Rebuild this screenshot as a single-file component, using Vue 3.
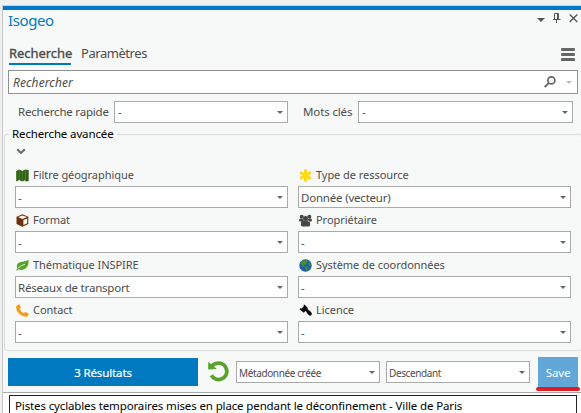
<script setup>
const filters = [
  { id: 'map', label: 'Filtre géographique', value: '-' },
  { id: 'star', label: 'Type de ressource', value: 'Donnée (vecteur)' },
  { id: 'cube', label: 'Format', value: '-' },
  { id: 'users', label: 'Propriétaire', value: '-' },
  { id: 'leaf', label: 'Thématique INSPIRE', value: 'Réseaux de transport' },
  { id: 'globe', label: 'Système de coordonnées', value: '-' },
  { id: 'phone', label: 'Contact', value: '-' },
  { id: 'gavel', label: 'Licence', value: '-' },
]
</script>

<template>
  <div class="window">
    <div class="panel">
      <header class="title-bar">
        <h1>Isogeo</h1>
        <div class="window-tools">
          <svg width="8" height="14" viewBox="0 0 8 14"><path d="M0 6H8L4 10Z" fill="#555" /></svg>
          <svg width="8" height="14" viewBox="0 0 8 14" fill="none" stroke="#555"><path d="M1.500 7V1.500H5.500V7M4.500 1V7M0 7.500H7.500M3.500 7.500V11" /></svg>
          <svg width="9" height="14" viewBox="0 0 9 14" fill="none" stroke="#555" stroke-width="1.400"><path d="M.7 2.500L8.300 10.100M8.300 2.500L.7 10.100" /></svg>
        </div>
      </header>

      <nav class="tabs">
        <span class="tab active">Recherche</span>
        <span class="tab">Paramètres</span>
        <svg class="menu" width="14" height="14" viewBox="0 0 14 14" fill="#666"><rect y="0" width="14" height="3" rx="1" /><rect y="5" width="14" height="3" rx="1" /><rect y="10" width="14" height="3" rx="1" /></svg>
      </nav>

      <div class="search">
        <span>Rechercher</span>
        <svg width="12" height="12" viewBox="0 0 12 12" fill="none" stroke="#666"><circle cx="7.400" cy="4.400" r="3.500" stroke-width="1.700" /><path d="M4.800 7L.6 11.200" stroke-width="1.800" /></svg>
        <i class="arrow pale"></i>
      </div>

      <div class="quick">
        <label class="quick-label">Recherche rapide</label>
        <div class="combo"><span>-</span><i class="arrow"></i></div>
        <label class="key-label">Mots clés</label>
        <div class="combo"><span>-</span><i class="arrow"></i></div>
      </div>

      <fieldset class="advanced">
        <legend>Recherche avancée</legend>
        <svg class="chevron" width="10" height="7" viewBox="0 0 10 7" fill="none" stroke="#666" stroke-width="2"><path d="M1.200 1.300L5 4.900L8.800 1.300" /></svg>
        <div class="grid">
          <div v-for="f in filters" :key="f.id" class="field">
            <label class="field-label">
              <svg width="13" height="13" viewBox="0 0 13 13">
                <g v-if="f.id === 'map'">
                  <path d="M.2 2L3.200.5V11L.2 12.600ZM3.200.5L6.300 2V12.600L3.200 11ZM6.300 2L9.300.5V11L6.300 12.600ZM9.300.5L12.700 1V12L9.300 12.600Z" fill="#2d6212" />
                  <path d="M3.300 1V11M6.400 2V12M9.400 1V12" stroke="#6f9660" stroke-width=".5" />
                </g>
                <g v-else-if="f.id === 'star'" stroke-linecap="round">
                  <path d="M6.500 1.700V11.300M2.200 4L10.800 9M10.800 4L2.200 9" stroke="#f5bd3c" stroke-width="3" />
                  <path d="M6.500 1.700V11.300M2.200 4L10.800 9M10.800 4L2.200 9" stroke="#ffe600" stroke-width="2" />
                </g>
                <g v-else-if="f.id === 'cube'">
                  <path d="M6.500.3L12.300 2.700V10L6.500 12.700L.5 10V2.700Z" fill="#73300c" />
                  <path d="M2 3.100L6.500 1.400L11 3.100L6.500 4.900ZM7.400 6.100L11.200 4.500V9.200L7.400 11.100Z" fill="#f7f9f8" />
                </g>
                <g v-else-if="f.id === 'users'" fill="#464646">
                  <circle cx="2.700" cy="2.700" r="2" /><circle cx="10.300" cy="2.700" r="2" />
                  <path d="M.1 7V5.500Q.5 4.500 2 4.600L4.200 5.300V7.500H.7ZM12.900 7V5.500Q12.500 4.500 11 4.600L8.800 5.300V7.500H12.300ZM1.900 11.500V9Q2.300 6.500 4.500 6.300H8.500Q10.700 6.500 11.100 9V11.500Q10.400 12.500 9 12.500H4Q2.600 12.500 1.900 11.500Z" />
                  <circle cx="6.500" cy="4.500" r="2.500" stroke="#77807b" stroke-width=".3" />
                </g>
                <g v-else-if="f.id === 'leaf'">
                  <path d="M12.600.9Q9 2.400 5 2.900Q1.100 3.500.8 7Q.7 8.500 1.500 9.400L.1 10.800L.9 11.700L2.600 10.200Q7 12.200 10.300 8.800Q13 6 12.600.9Z" fill="#55a52b" />
                  <path d="M2.300 8.900Q5.500 6 9 5.300" fill="none" stroke="#d8efca" stroke-width="1" />
                </g>
                <g v-else-if="f.id === 'globe'">
                  <circle cx="6.500" cy="6.500" r="6.200" fill="#1c61a4" />
                  <path d="M2.300 2.200L5.200.9L8 1.500L9.100 3L7.400 4.200L6.600 5.800L4.300 6L5.700 7.700L4.600 8.100L2.300 6L1.300 3.900ZM6.200 7.600L8.900 7.700L10 9L8.500 10.600L7.500 12L6.600 10.100ZM10 3L11.300 3.700L12.200 6.500L10.700 7.100L9.300 5Z" fill="#4d8a31" />
                </g>
                <path v-else-if="f.id === 'phone'" d="M3.200.3L4.900 3.600Q4.800 4.400 3.600 5Q4.900 7.900 8 9.300Q8.700 8 9.400 8L12.700 9.800Q12.600 12.600 9.800 12.700Q5.800 12.500 2.800 9.300Q-.3 6 .3 2.500Q.6.5 3.200.3Z" fill="#f59b14" />
                <path v-else d="M5.400.5L9.100 4.200L8.400 5L9.800 6.300Q11 6.400 12.700 9L12.800 10.500L11.700 11.700L10.300 11.500L7.700 8.900V8.100L6.300 6.900L4.900 8.700L.4 5.300L1.500 4.200L2.500 4.500L5 2.100L4.500 1.300Z" fill="#0a0a0a" />
              </svg>
              <span>{{ f.label }}</span>
            </label>
            <div class="combo"><span>{{ f.value }}</span><i class="arrow"></i></div>
          </div>
        </div>
      </fieldset>

      <div class="actions">
        <button class="results">3 Résultats</button>
        <svg class="refresh" width="21" height="21" viewBox="0 0 21 21"><path d="M4 5.100Q6.300 2.100 10.500 2.100A8.200 8.200 0 1 1 3.400 14.300" fill="none" stroke="#5ba22d" stroke-width="3.800" /><path d="M.2.800L8.800 8.100L.2 8.500Z" fill="#5ba22d" /></svg>
        <div class="combo small"><span>Métadonnée créée</span><i class="arrow"></i></div>
        <div class="combo small second"><span>Descendant</span><i class="arrow"></i></div>
        <div class="save-wrap"><button class="save">Save</button><i class="marker"></i></div>
      </div>

      <div class="list">
        <div class="item">Pistes cyclables temporaires mises en place pendant le déconfinement - Ville de Paris</div>
      </div>
    </div>
  </div>
</template>

<style>
body { margin: 0; overflow: hidden; }
</style>

<style scoped>
.window {
  box-sizing: border-box;
  width: 581px;
  height: 413px;
  padding: 5px 0 0 2px;
  overflow: hidden;
  background: #f0f0f0;
  font: 11.5px/16px "Noto Sans", "Open Sans", sans-serif;
  letter-spacing: -.13px;
  color: #4c4c4c;
}
.window * { box-sizing: border-box; white-space: nowrap; }
svg { display: block; flex: none; }
.panel {
  height: 408px;
  border-left: 1px solid #c6c6c6;
  border-top: 1px solid #d5d2cd;
  background: #f7f9f8;
}
.title-bar {
  display: flex;
  justify-content: space-between;
  height: 36px;
  padding: 1px 3px 0 5px;
  border-top: 4px solid #0079c8;
}
h1 {
  margin: 0;
  font-size: 15px;
  line-height: 18px;
  font-weight: 400;
  letter-spacing: -.4px;
  color: #0079c1;
}
.window-tools { display: flex; gap: 8px; padding-top: 1px; }
.tabs {
  display: flex;
  align-items: flex-start;
  height: 28px;
  padding: 3px 6px 0 6px;
  font-size: 13px;
}
.tab { height: 20px; line-height: 17px; margin-right: 10px; letter-spacing: -.45px; }
.tab.active { width: 62px; letter-spacing: -.05px; border-bottom: 2px solid #0079c1; -webkit-text-stroke: .35px #4c4c4c; }
.menu { margin: 3px 0 0 auto; }
.search {
  display: flex;
  align-items: center;
  width: 570px;
  height: 24px;
  margin-left: 5px;
  padding: 0 5px 0 4px;
  border: 1px solid #919191;
  background: #fff;
  font-size: 12px;
  letter-spacing: .1px;
  font-style: italic;
}
.search span { flex: 1; padding-top: 1px; }
.search .arrow { margin-left: 10px; }
.quick { display: flex; align-items: center; margin: 7px 8px 0 15px; height: 22px; }
.quick-label { width: 96px; letter-spacing: -.2px; }
.key-label { width: 55px; margin-left: 15px; }
.quick .combo { width: 174px; }
.quick .combo:last-child { width: 215px; }
.combo {
  display: flex;
  align-items: center;
  justify-content: space-between;
  height: 22px;
  padding: 0 4px 0 3px;
  border: 1px solid #a8abaa;
  background: #fff;
  letter-spacing: -.2px;
}
.arrow {
  flex: none;
  border: 3px solid transparent;
  border-top-color: #666;
  border-bottom: 0;
}
.pale { border-top-color: #bbb; }
.advanced {
  height: 225px;
  min-width: 0;
  margin: 3px -1px 0 1px;
  padding: 0 8px 0 10px;
  border: 1px solid #d8dad9;
  border-radius: 3px;
}
legend {
  height: 16px;
  margin-left: -6px;
  padding: 0 3px;
  line-height: 15px;
  color: #000;
}
.chevron { margin: 6px 0 0 1px; }
.grid { display: grid; grid-template-columns: 273px 273px; column-gap: 10px; margin-top: 12px; }
.field { height: 45px; }
.field .combo { padding-left: 2px; }
.field .combo span { padding-top: 1px; }
.field-label {
  display: flex;
  align-items: center;
  height: 19px;
  gap: 4px;
  padding: 0 0 3px 1px;
  font-size: 11px;
  letter-spacing: -.05px;
}
.actions { display: flex; height: 41px; padding-left: 5px; }
button { border: 0; padding: 0; font: inherit; letter-spacing: inherit; color: #fff; }
.results { width: 190px; height: 28px; margin-top: 7px; padding-top: 2px; background: #0079c1; -webkit-text-stroke: .2px #fff; }
.refresh { margin: 10px 7px 0 10px; }
.small { width: 144px; margin-top: 10px; padding-left: 2px; font-size: 10px; letter-spacing: -.38px; }
.small span { padding-top: 1px; }
.second { margin-left: 6px; }
.save-wrap { position: relative; width: 40px; margin: 6px 0 0 8px; }
.save { width: 40px; height: 30px; padding-top: 2px; background: #63a7d9; }
.marker { position: absolute; left: -2px; top: 30px; width: 44px; height: 4px; border-radius: 2px; background: #e51b23; }
.list { height: 22px; padding: 2px 4px 0 6px; border-top: 1px solid #a5a7a6; background: #fff; }
.item { height: 24px; padding: 2px 5px; border: 1px solid #222; background: #fff; color: #000; }
</style>
